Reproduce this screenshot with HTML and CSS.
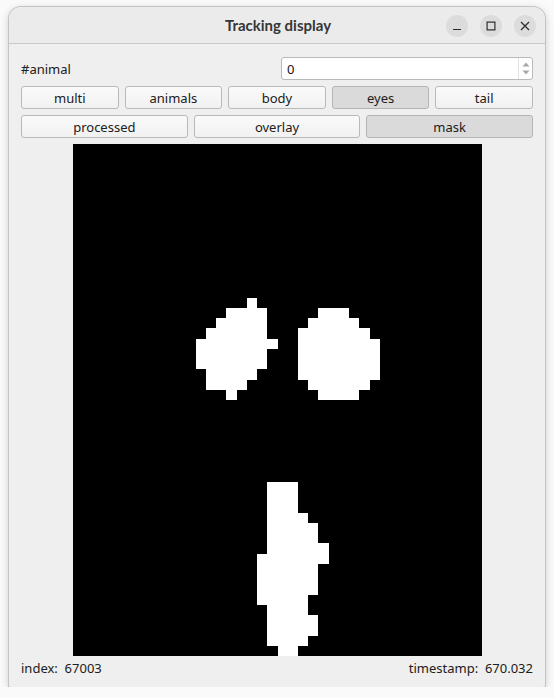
FILE: index.html
```html
<!DOCTYPE html>
<html>
<head>
<meta charset="utf-8">
<link rel="stylesheet" href="styles.css">
</head>
<body>
<div class="window">
  <div class="titlebar">
    <div class="title">Tracking display</div>
    <div class="wbtns">
      <span class="wbtn"><svg width="10" height="10" viewBox="0 0 10 10"><line x1="1" y1="8.5" x2="9" y2="8.5" stroke="#2e2e2e" stroke-width="1.2"/></svg></span>
      <span class="wbtn"><svg width="10" height="10" viewBox="0 0 10 10"><rect x="1.1" y="1.1" width="7.8" height="7.8" fill="none" stroke="#2e2e2e" stroke-width="1.2"/></svg></span>
      <span class="wbtn"><svg width="10" height="10" viewBox="0 0 10 10"><path d="M1 1L9 9M9 1L1 9" stroke="#2e2e2e" stroke-width="1.3"/></svg></span>
    </div>
  </div>
  <div class="content">
    <div class="row-animal">
      <span class="label">#animal</span>
      <div class="spin">
        <span class="spin-val">0</span>
        <div class="spin-arrows">
          <svg width="8" height="5" viewBox="0 0 8 5"><path d="M0.5 4.5L4 0.5L7.5 4.5Z" fill="#a8a8a8"/></svg>
          <svg width="8" height="5" viewBox="0 0 8 5"><path d="M0.5 0.5L4 4.5L7.5 0.5Z" fill="#a8a8a8"/></svg>
        </div>
      </div>
    </div>
    <div class="btnrow five">
      <button class="btn">multi</button>
      <button class="btn">animals</button>
      <button class="btn">body</button>
      <button class="btn on">eyes</button>
      <button class="btn">tail</button>
    </div>
    <div class="btnrow three">
      <button class="btn">processed</button>
      <button class="btn">overlay</button>
      <button class="btn on">mask</button>
    </div>
    <div class="imgwrap">
      <svg class="mask" width="409" height="512" viewBox="0 0 40 50" preserveAspectRatio="none" shape-rendering="crispEdges">
        <rect x="0" y="0" width="40" height="50" fill="#000"/>
        <g fill="#fff">
          <!-- left eye -->
          <rect x="17" y="15" width="1" height="1"/>
          <rect x="15" y="16" width="4" height="1"/>
          <rect x="14" y="17" width="5" height="1"/>
          <rect x="13" y="18" width="6" height="1"/>
          <rect x="12" y="19" width="8" height="1"/>
          <rect x="12" y="20" width="7" height="2"/>
          <rect x="13" y="22" width="5" height="1"/>
          <rect x="13" y="23" width="4" height="1"/>
          <rect x="15" y="24" width="1" height="1"/>
          <!-- right eye -->
          <rect x="24" y="16" width="3" height="1"/>
          <rect x="23" y="17" width="5" height="1"/>
          <rect x="22" y="18" width="7" height="1"/>
          <rect x="22" y="19" width="8" height="4"/>
          <rect x="23" y="23" width="6" height="1"/>
          <rect x="24" y="24" width="4" height="1"/>
          <!-- tail -->
          <rect x="19" y="33" width="3" height="3"/>
          <rect x="19" y="36" width="4" height="1"/>
          <rect x="19" y="37" width="5" height="2"/>
          <rect x="19" y="39" width="6" height="1"/>
          <rect x="18" y="40" width="7" height="1"/>
          <rect x="18" y="41" width="6" height="3"/>
          <rect x="18" y="44" width="5" height="1"/>
          <rect x="19" y="45" width="4" height="1"/>
          <rect x="19" y="46" width="5" height="2"/>
          <rect x="19" y="48" width="4" height="1"/>
          <rect x="20" y="49" width="2" height="1"/>
        </g>
      </svg>
    </div>
    <div class="status">
      <span>index:&nbsp; 67003</span>
      <span>timestamp:&nbsp; 670.032</span>
    </div>
  </div>
</div>
</body>
</html>
```
FILE: styles.css
```css
html, body {
  margin: 0;
  padding: 0;
  background: #fafafa;
  font-family: "Noto Sans", "DejaVu Sans", sans-serif;
}
.window {
  position: relative;
  margin: 7px 0 0 9px;
  width: 536px;
  height: 680px;
  background: #efefef;
  border-radius: 12px 12px 2px 2px;
  box-shadow: 0 0 0 1px #c4c4c4, 0 2px 8px rgba(0,0,0,0.22);
  overflow: hidden;
  display: flex;
  flex-direction: column;
}
.titlebar {
  height: 36px;
  flex: none;
  background: #ebebeb;
  border-bottom: 1px solid #c9c9c9;
  display: flex;
  align-items: center;
  justify-content: center;
}
.title {
  font-family: "Lato", "Noto Sans", sans-serif;
  font-weight: bold;
  font-size: 15px;
  color: #363636;
  margin-left: 2px;
}
.wbtns {
  position: absolute;
  right: 9px;
  top: 8px;
  display: flex;
  gap: 12px;
}
.wbtn {
  width: 22px;
  height: 22px;
  border-radius: 50%;
  background: #dcdcdc;
  display: flex;
  align-items: center;
  justify-content: center;
}
.content {
  flex: 1;
  padding: 13px 12px 0 12px;
  display: flex;
  flex-direction: column;
}
.row-animal {
  display: flex;
  align-items: center;
  justify-content: space-between;
  height: 23px;
  font-size: 13px;
  color: #202020;
}
.label { padding-left: 0; }
.spin {
  width: 250px;
  height: 21px;
  background: #fff;
  border: 1px solid #b9b9b9;
  border-radius: 3px;
  display: flex;
  align-items: center;
  justify-content: space-between;
}
.spin-val {
  padding-left: 5px;
  font-size: 13px;
  color: #111;
}
.spin-arrows {
  width: 13px;
  height: 21px;
  border-left: 1px solid #e2e2e2;
  display: flex;
  flex-direction: column;
  align-items: center;
  justify-content: center;
  gap: 3px;
}
.btnrow {
  display: grid;
  gap: 6px;
  margin-top: 6px;
}
.btnrow.five { grid-template-columns: repeat(5, 1fr); }
.btnrow.three { grid-template-columns: repeat(3, 1fr); }
.btn {
  height: 23px;
  margin: 0;
  padding: 0;
  font-family: "Noto Sans", "DejaVu Sans", sans-serif;
  font-size: 13px;
  color: #202020;
  background: linear-gradient(#fafafa, #f1f1f1);
  border: 1px solid #b9b9b9;
  border-radius: 3px;
}
.btn.on {
  background: #dadada;
  border-color: #b4b4b4;
}
.imgwrap {
  margin-top: 6px;
  display: flex;
  justify-content: center;
  padding-left: 1px;
}
.mask { display: block; }
.status {
  display: flex;
  justify-content: space-between;
  align-items: center;
  height: 24px;
  font-size: 13px;
  color: #202020;
}
```
